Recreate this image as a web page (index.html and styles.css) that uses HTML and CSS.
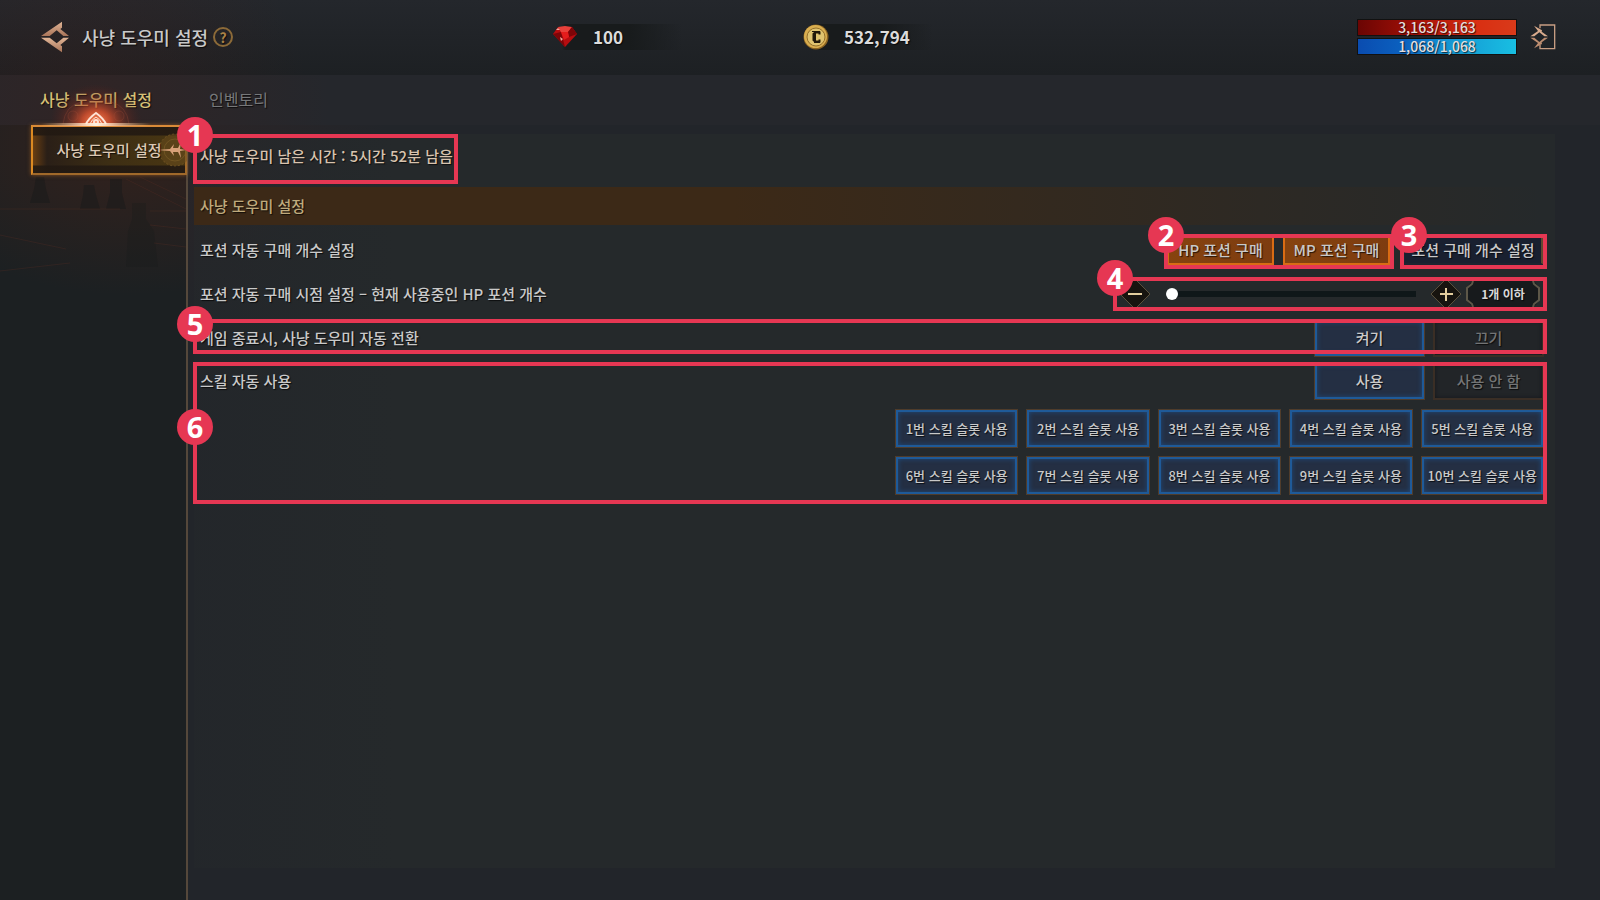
FILE: index.html
```html
<!DOCTYPE html>
<html lang="ko">
<head>
    <meta charset="UTF-8">
    <meta name="viewport" content="width=device-width, initial-scale=1.0">
    <title>사냥 도우미 설정</title>
    <link rel="stylesheet" href="styles.css">
</head>
<body>
    <!-- header -->
    <header class="topbar">
        <div class="title">
            <button class="iconBtn" aria-label="뒤로">
                <svg width="30" height="32" viewBox="0 0 90 96">
                    <defs>
                        <linearGradient id="bronze" x1="0" y1="0" x2="0" y2="1">
                            <stop offset="0" stop-color="#e0b596" />
                            <stop offset="1" stop-color="#a97458" />
                        </linearGradient>
                    </defs>
                    <path fill="url(#bronze)" d="M3 45 L66 2 V20 L61 24 L87 45 H70 L50 28 L29 45 Z" />
                    <path fill="url(#bronze)" d="M3 50 L66 94 V76 L61 72 L87 50 H70 L50 67 L29 50 Z" />
                </svg>
            </button>
            <h1>사냥 도우미 설정</h1>
            <button class="iconBtn help" aria-label="도움말">?</button>
        </div>

        <div class="money">
            <svg width="26" height="24" viewBox="0 0 26 24">
                <path fill="#b60d10" d="M6 2 L20 2 L25 9 L13 22 L1 9 Z" />
                <path fill="#e8403a" d="M6 2 L13 1 L20 2 L16 7 L9 7 Z" />
                <path fill="#7d0508" d="M1 9 L9 7 L13 22 Z M16 7 L20 2 L25 9 L17 12 Z" />
                <path fill="#e51c1c" d="M9 7 H16 L17 12 L12 15 Z" />
                <path fill="#f5a79b" d="M8 12 L11 14 L9 16 Z M4 5 L6 3 L8 5 Z" />
            </svg>
            <span>100</span>
        </div>
        <div class="money">
            <svg width="26" height="26" viewBox="0 0 26 26">
                <circle cx="13" cy="13" r="12.5" fill="#8b6422" />
                <circle cx="12.5" cy="12.5" r="11.5" fill="#d9ae50" />
                <circle cx="13" cy="13" r="9" fill="#dfc36f" stroke="#94702b" />
                <path fill="none" stroke="#21180a" stroke-width="2" d="M16.5 10.500 V8.500 H12 L10.500 10 V16 L12 17.500 H16.500 V15.500" />
                <path stroke="#21180a" stroke-width="2" d="M12 8 V18" />
                <path stroke="#21180a" d="M9 7.500 H17 M11 18.500 H17" />
            </svg>
            <span>532,794</span>
        </div>

        <div class="status">
            <div class="gauges">
                <div class="gauge hp">3,163/3,163</div>
                <div class="gauge mp">1,068/1,068</div>
            </div>
            <button class="iconBtn" aria-label="나가기">
                <svg width="26" height="28" viewBox="0 0 78 84">
                    <path fill="none" stroke="#c79d82" stroke-width="4" d="M30 16 V6 H74 V77 H30 V66" />
                    <path fill="#d9ab8d" d="M1 40 L24 24 L12 8 L36 22 L35 26 L54 40 H43 L28 28 L13 40 Z" />
                    <path fill="#bd8d70" d="M1 44 H13 L28 57 L43 44 H54 L35 58 L36 63 L12 76 L24 60 Z" />
                </svg>
            </button>
        </div>
    </header>

    <!-- 상단 탭 -->
    <nav class="tabs">
        <a href="#helper" class="active">사냥 도우미 설정
            <svg class="crest" width="190" height="48" viewBox="0 0 190 48">
                <defs>
                    <radialGradient id="ember">
                        <stop offset="0" stop-color="#ff8a58" />
                        <stop offset="0.3" stop-color="#e2542f" stop-opacity="0.8" />
                        <stop offset="0.65" stop-color="#8a3020" stop-opacity="0.35" />
                        <stop offset="1" stop-color="#5a1d18" stop-opacity="0" />
                    </radialGradient>
                    <linearGradient id="edge">
                        <stop offset="0" stop-color="#ffd9a0" stop-opacity="0" />
                        <stop offset="0.5" stop-color="#fff2e0" />
                        <stop offset="1" stop-color="#ffd9a0" stop-opacity="0" />
                    </linearGradient>
                </defs>
                <ellipse cx="95" cy="44" rx="46" ry="38" fill="url(#ember)" />
                <g fill="none" stroke="#b0533b" stroke-opacity="0.25">
                    <circle cx="72" cy="38" r="5" />
                    <circle cx="118" cy="38" r="5" />
                    <path d="M62 46 Q64 28 80 24 M128 46 Q126 28 110 24" />
                </g>
                <g fill="none" stroke="#ffe3d6" stroke-width="2">
                    <path d="M85 46 Q88 40 95 35 Q102 40 105 46" />
                    <path stroke-width="1" d="M89 46 Q91 41 95 39 Q99 41 101 46" />
                    <circle cx="95" cy="44" r="2" />
                </g>
                <rect x="40" y="45" width="110" height="3" fill="url(#edge)" />
            </svg>
        </a>
        <a href="#inventory">인벤토리</a>
    </nav>

    <div class="content">
        <aside class="side">
            <!-- 배경 실루엣 -->
            <svg class="scene" width="186" height="160" viewBox="0 0 186 160">
                <g fill="#171a1a" fill-opacity="0.5">
                    <path d="M36 2 H44 L46 14 L50 28 H30 L34 14 Z" />
                    <path d="M84 10 H94 L96 20 L100 34 H80 L83 20 Z" />
                    <path d="M110 4 H122 L122 18 L126 34 H106 L110 18 Z" />
                    <path d="M132 28 H146 V44 L154 56 L158 92 H126 L128 56 L132 44 Z" fill-opacity="0.3" />
                </g>
                <g stroke="#5a3023" stroke-opacity="0.3" fill="none">
                    <path d="M0 34 H120 M150 36 H186 M150 50 L186 54 M154 68 L186 72 M0 60 L66 74 M0 96 L70 88" />
                    <path d="M126 4 L186 34 M140 2 L186 24" />
                </g>
            </svg>
            <button class="sideItem">
                <span>사냥 도우미 설정</span>
                <svg class="medal" width="32" height="42" viewBox="0 0 32 42">
                    <circle cx="20" cy="21" r="16" fill="#6b4d1d" fill-opacity="0.5" stroke="#86652c" stroke-opacity="0.6" stroke-dasharray="2 2" />
                    <circle cx="20" cy="21" r="11" fill="none" stroke="#86652c" stroke-opacity="0.5" />
                    <path fill="#d8a078" d="M2 21 L15 20 L19 15 L18 19 L23 19 L26 13 L25 20 L31 21 L25 22 L26 29 L23 23 L18 23 L19 27 L15 22 Z" />
                </svg>
            </button>
        </aside>

        <main class="main">
            <div class="panel">
                <div class="remain">
                    사냥 도우미 남은 시간 : 5시간 52분 남음
                    <span class="marker"><b>1</b></span>
                </div>

                <h2>사냥 도우미 설정</h2>

                <div class="row">
                    <span>포션 자동 구매 개수 설정</span>
                    <div class="group buy">
                        <button class="btn orange">HP 포션 구매</button>
                        <button class="btn orange">MP 포션 구매</button>
                        <span class="marker"><b>2</b></span>
                    </div>
                    <div class="group amount">
                        <button class="btn navy">포션 구매 개수 설정</button>
                        <span class="marker"><b>3</b></span>
                    </div>
                </div>

                <div class="row">
                    <label for="potionCount">포션 자동 구매 시점 설정 – 현재 사용중인 HP 포션 개수</label>
                    <div class="group stepper">
                        <button class="step" aria-label="감소">
                            <svg width="32" height="32" viewBox="0 0 32 32">
                                <path fill="#17140f" stroke="#5a503c" d="M16 1 L31 16 L16 31 L1 16 Z" />
                                <path stroke="#e3cd9d" stroke-width="2" d="M9 16 H23" />
                            </svg>
                        </button>
                        <input type="range" id="potionCount" min="1" max="100" value="1">
                        <button class="step" aria-label="증가">
                            <svg width="32" height="32" viewBox="0 0 32 32">
                                <path fill="#17140f" stroke="#5a503c" d="M16 1 L31 16 L16 31 L1 16 Z" />
                                <path stroke="#e3cd9d" stroke-width="2" d="M10 16 H23 M16 10 V23" />
                            </svg>
                        </button>
                        <output class="value" for="potionCount">
                            <svg width="76" height="28" viewBox="0 0 76 28">
                                <path fill="#171a1c" d="M7 1 H69 L74 7 V21 L69 27 H7 L2 21 V7 Z" />
                                <path fill="none" stroke="#5d5748" stroke-width="2" d="M8 1 L7 4 L2 8 V20 L7 24 L8 27 M68 1 L69 4 L74 8 V20 L69 24 L68 27" />
                            </svg>
                            <span>1개 이하</span>
                        </output>
                        <span class="marker"><b>4</b></span>
                    </div>
                </div>

                <div class="row autoSwitch">
                    <span>게임 종료시, 사냥 도우미 자동 전환</span>
                    <div class="toggle">
                        <button class="btn blue">켜기</button>
                        <button class="btn off">끄기</button>
                    </div>
                    <span class="marker"><b>5</b></span>
                </div>

                <section class="skill">
                    <div class="row">
                        <span>스킬 자동 사용</span>
                        <div class="toggle">
                            <button class="btn blue">사용</button>
                            <button class="btn off">사용 안 함</button>
                        </div>
                    </div>
                    <div class="slots">
                        <button class="btn slot">1번 스킬 슬롯 사용</button>
                        <button class="btn slot">2번 스킬 슬롯 사용</button>
                        <button class="btn slot">3번 스킬 슬롯 사용</button>
                        <button class="btn slot">4번 스킬 슬롯 사용</button>
                        <button class="btn slot">5번 스킬 슬롯 사용</button>
                        <button class="btn slot">6번 스킬 슬롯 사용</button>
                        <button class="btn slot">7번 스킬 슬롯 사용</button>
                        <button class="btn slot">8번 스킬 슬롯 사용</button>
                        <button class="btn slot">9번 스킬 슬롯 사용</button>
                        <button class="btn slot">10번 스킬 슬롯 사용</button>
                    </div>
                    <span class="marker"><b>6</b></span>
                </section>
            </div>
        </main>
    </div>
</body>
</html>
```
FILE: styles.css
```css
* {
    box-sizing: border-box;
}

body {
    margin: 0;
    min-height: 100vh;
    display: flex;
    flex-direction: column;
    background-color: #1c2022;
    color: #c9c9c9;
    font-family: "Noto Sans CJK KR", "Noto Sans", sans-serif;
    font-size: 15px;
    font-weight: 500;
    line-height: 20px;
    text-shadow: 1px 1px 1px rgba(0, 0, 0, 0.7);
}

button {
    margin: 0;
    padding: 0;
    border: none;
    background: none;
    color: inherit;
    font: inherit;
    text-shadow: inherit;
    white-space: nowrap;
    cursor: pointer;
}

svg {
    display: block;
}

/* header */
.topbar {
    display: grid;
    grid-template-columns: 512px 251px 1fr auto;
    align-items: center;
    height: 75px;
    padding: 0 44px 2px 40px;
    background: radial-gradient(circle at 90px 110px, rgba(70, 30, 22, 0.3), transparent 220px),
        linear-gradient(#24272c, #1d2023);
}

.title {
    display: flex;
    align-items: center;
}

.title h1 {
    margin: 0 5px 0 12px;
    font-size: 18px;
    font-weight: 500;
}

.title .help {
    width: 20px;
    height: 20px;
    border: 2px solid #8c6a38;
    border-radius: 50%;
    color: #a98146;
    font-size: 14px;
    font-weight: 700;
    line-height: 16px;
}

.money {
    display: flex;
    align-items: center;
    gap: 15px;
    width: 130px;
    height: 26px;
    background: linear-gradient(90deg, transparent 10px, #181b1c 14px, #181b1c 60%, transparent);
    color: #dcdcdc;
    font-size: 17px;
    font-weight: 700;
}

.status {
    display: flex;
    align-items: center;
    gap: 13px;
}

.gauges {
    display: grid;
    gap: 2px;
    width: 160px;
}

.gauge {
    height: 17px;
    border: 1px solid #111;
    color: #e3dede;
    font-size: 14px;
    line-height: 14px;
    text-align: center;
}

.hp {
    background: linear-gradient(90deg, #6b0503, #a81208 40%, #d92f12 75%, #d93a1a);
}

.mp {
    background: linear-gradient(90deg, #0a4cb0, #0b62c0 30%, #1593d2 55%, #18bfe2);
}

/* 상단 탭 */
.tabs {
    display: flex;
    gap: 57px;
    height: 50px;
    padding: 0 40px;
    background: radial-gradient(circle at 90px 30px, rgba(70, 32, 24, 0.35), transparent 240px), #25272c;
    font-size: 16px;
    line-height: 48px;
}

.tabs a {
    position: relative;
    color: #77787a;
    font-weight: 400;
    text-decoration: none;
}

.tabs .active {
    color: #d6c176;
    font-weight: 500;
}

.crest {
    position: absolute;
    left: 50%;
    bottom: -1px;
    margin-left: -95px;
    z-index: 1;
}

/* 본문 */
.content {
    flex: 1;
    display: flex;
}

.side {
    position: relative;
    width: 188px;
    padding-left: 31px;
    border-right: 2px solid #55483b;
    background: radial-gradient(ellipse 240px 150px at 130px 20px, rgba(58, 34, 27, 0.8), transparent);
}

.scene {
    position: absolute;
    left: 0;
    top: 50px;
}

.sideItem {
    position: relative;
    width: 156px;
    height: 50px;
    border: 2px solid #a0692a;
    border-top-color: #d98a38;
    border-left-color: #dc8a22;
    background: linear-gradient(rgba(34, 25, 18, 0.9) 8px, transparent 9px, transparent 38px, rgba(34, 25, 18, 0.9) 39px),
        linear-gradient(90deg, #6a3f12, #2a1f17 14px, #3d2e14 50%, #4a3712);
    box-shadow: 0 0 4px rgba(220, 130, 40, 0.5);
    color: #dcc8b4;
}

.sideItem span {
    position: relative;
    z-index: 1;
}

.medal {
    position: absolute;
    right: -2px;
    top: 2px;
}

.main {
    flex: 1;
    display: flex;
    padding: 9px 45px 32px 6px;
    background: radial-gradient(circle at 0 0, rgba(70, 35, 28, 0.25), transparent 200px), #22252a;
}

.panel {
    flex: 1;
    padding-right: 11px;
    background: linear-gradient(90deg, rgba(37, 41, 43, 0.4), #25292b 200px);
}

.remain {
    position: relative;
    width: fit-content;
    height: 50px;
    padding: 0 4px 0 6px;
    color: #d8c3ae;
    line-height: 44px;
}

.panel h2 {
    margin: 3px 0;
    padding-left: 6px;
    background: linear-gradient(90deg, #3c2917 40%, rgba(60, 41, 23, 0));
    color: #bfaa7c;
    font-size: 15px;
    font-weight: 500;
    line-height: 38px;
}

.row {
    display: flex;
    align-items: center;
    gap: 13px;
    height: 44px;
    padding-left: 6px;
}

.row > :first-child {
    margin-right: auto;
}

.group {
    position: relative;
    display: flex;
}

.buy {
    gap: 9px;
}

.toggle {
    display: grid;
    grid-template-columns: 111px 111px;
    gap: 8px;
}

.btn {
    height: 38px;
    border: 1px solid #4f3c2b;
}

.orange {
    width: 107px;
    height: 30px;
    border: 2px solid #d96c14;
    background: linear-gradient(90deg, #86430f, #7d3c10);
}

.navy {
    width: 141px;
    height: 30px;
    border: 2px solid #1c2431;
    border-right: 3px solid #62492f;
    background-color: #192030;
}

.blue,
.slot {
    background-color: #242f43;
    box-shadow: inset 0 0 0 2px #1f5a98, inset 0 0 5px 2px #1f4a7c;
}

.off {
    border: 2px solid #3a2e25;
    background-color: #222528;
    box-shadow: inset 0 0 4px #14171a;
    color: #737475;
}

.slot {
    height: 39px;
    font-size: 13px;
}

/* 슬라이더 */
.stepper {
    align-items: center;
    height: 30px;
    padding-right: 3px;
}

.stepper input {
    appearance: none;
    width: 250px;
    height: 12px;
    margin: 0 14px 0 15px;
    background: linear-gradient(transparent 3px, #0f1719 3px, #0f1719 9px, transparent 9px);
}

.stepper input::-webkit-slider-thumb {
    appearance: none;
    width: 12px;
    height: 12px;
    border-radius: 50%;
    background-color: #fff;
}

.value {
    display: grid;
    place-items: center;
    margin-left: 3px;
    color: #d8d8d8;
    font-size: 12px;
    font-weight: 700;
}

.value > * {
    grid-area: 1 / 1;
}

.autoSwitch,
.skill {
    position: relative;
}

.skill .row {
    height: 42px;
}

.slots {
    display: grid;
    grid-template-columns: repeat(5, 1fr);
    gap: 8px;
    width: 649px;
    margin: 7px 0 0 auto;
}

/* 번호 표시 */
.marker {
    position: absolute;
    inset: 0 -1px 0 -1px;
    border: 4px solid #e63753;
    pointer-events: none;
    z-index: 2;
}

.marker b {
    position: absolute;
    left: -20px;
    top: -21px;
    width: 36px;
    height: 36px;
    border-radius: 50%;
    background-color: #e63753;
    color: #fff;
    font-family: "Noto Sans", sans-serif;
    font-size: 29px;
    line-height: 36px;
    text-align: center;
    text-shadow: none;
}

.buy .marker {
    inset: -1px -4px -4px -3px;
}

.amount .marker {
    inset: -1px -3px -4px -3px;
}

.amount .marker b {
    left: -13px;
}

.stepper .marker {
    inset: -2px -3px -2px -6px;
}

.autoSwitch .marker {
    inset: 3px -3px 6px -1px;
}

.autoSwitch .marker b {
    top: -17px;
}

.skill .marker {
    inset: 2px -3px -9px -1px;
}

.skill .marker b {
    top: 43px;
}
```
